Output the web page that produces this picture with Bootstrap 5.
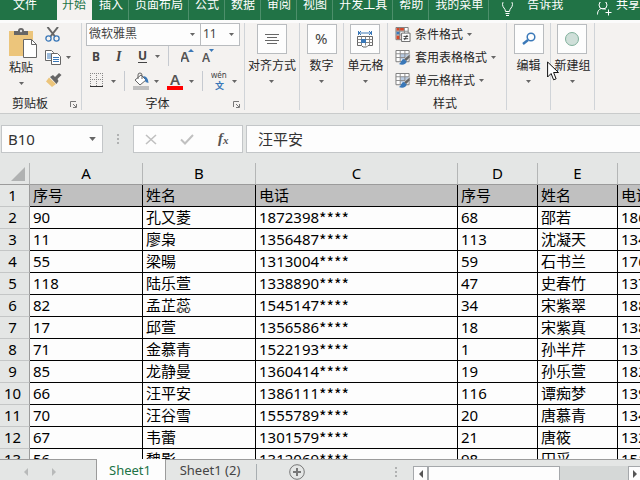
<!DOCTYPE html>
<html lang="zh-CN">
<head>
<meta charset="utf-8">
<meta name="viewport" content="width=device-width, initial-scale=1">
<title>Sheet1</title>
<link href="https://cdn.jsdelivr.net/npm/bootstrap@5.3.0/dist/css/bootstrap.min.css" rel="stylesheet">
<style>
:root { --green:#217346; --ribbon:#f4f2f0; --chrome:#e4e6e5; --line:#c3c6c8; }
body { font-family:"Noto Sans","Noto Sans CJK SC",sans-serif; font-size:12px; line-height:16px; color:#262626; background:var(--chrome); }
button { color:inherit; line-height:16px; }
.tool { border:0; background:none; padding:0; display:flex; align-items:center; }
.tool svg, .tool-stack svg { display:block; flex:none; }
.tabs { background:var(--green); height:20px; }
.tabs .nav-link { color:#fff; height:20px; line-height:12px; padding:0 5px 9px 6px; border-radius:0; display:flex; align-items:flex-end; white-space:nowrap; border-right:1px solid #4d8f6b; }
.tabs .nav-link.file { padding-left:13px; padding-right:20px; border-right:0; }
.tabs .nav-link.current { background:var(--ribbon); color:var(--green); padding-left:5px; padding-right:6px; border-right-color:var(--green); }
.tabs .plain { border-right:0; }
.tabs svg { margin-bottom:-9px; }
.ribbon { background:var(--ribbon); border-top:3px solid #fbfbfb; border-bottom:1px solid #c9cbcb; height:94px; }
.group { height:87px; border-right:1px solid #d0d4d8; display:flex; flex-direction:column; flex:none; }
.g-clip { width:82px; } .g-font { width:163px; } .g-align { width:55px; } .g-one { width:44px; } .g-style { width:119px; }
.foot { height:16px; padding-top:4px; padding-right:4px; }
.combo { appearance:none; height:23px; border:1px solid #b9bcbf; border-radius:0; color:#444; font-size:12px; line-height:16px; padding:0 0 1px 2px; background:#fdfdfd url("data:image/svg+xml,%3Csvg xmlns='http://www.w3.org/2000/svg' width='5' height='3'%3E%3Cpath d='M0 0h5L2.500 3z' fill='%23666'/%3E%3C/svg%3E") no-repeat right 5px center; }
.combo-name { width:115px; } .combo-size { width:40px; margin-left:-1px; }
.tool-stack { border:0; background:none; padding:0; display:flex; flex-direction:column; align-items:center; white-space:nowrap; }
.paste { padding:5px 0 0 9px; }
.clip-tools { padding:4px 0 0 8px; }
.tile { width:30px; height:30px; margin:1px 0 4px; border:1px solid #b9bcbf; background:#fdfdfd; display:flex; align-items:center; justify-content:center; }
.drop { margin-top:6px; }
.style-tools { padding:4px 0 0 7px; gap:8px; }
.style-tools .tool { gap:4px; }
.vsep { width:1px; height:20px; background:#c6cad0; flex:none; }
.fx-bar { padding:11px 0 10px 1px; }
.box { height:28px; border:1px solid var(--line); background:#fdfdfd; }
.box input { border:0; background:none; outline:0; font-size:15px; line-height:20px; color:#333; padding:0; min-width:0; }
.name-box { width:102px; padding-right:6px; } .name-box input { width:80px; padding-left:6px; flex-grow:1; }
.fx-keys { width:110px; }
.formula { border-right:0; margin-left:3px; padding-left:11px; }
.sheet { table-layout:fixed; width:820px; border-collapse:separate; border-spacing:0; color:#000; font-size:15px; line-height:21px; background:#fdfdfd; }
.sheet td, .sheet th { padding:0 0 0 3px; height:22px; font-weight:400; white-space:nowrap; overflow:hidden; border-right:1px solid #000; border-bottom:1px solid #000; }
.sheet tbody th { background:var(--chrome); text-align:center; padding:0 4px 0 0; border-right-color:#9b9b9b; border-bottom-color:#c4c6c6; }
.sheet thead th { background:var(--chrome); text-align:center; padding:0; border-right-color:#b4b6b6; border-bottom-color:#9b9b9b; }
.sheet .labels td { background:#c0c0c0; }
.hid { font-family:"Noto Sans CJK SC",sans-serif; font-size:16px; line-height:1; vertical-align:-2px; }
.w-head { width:30px; } .w-a { width:113px; } .w-c { width:202px; } .w-d { width:80px; }
.sheetbar { height:21px; border-top:1px solid #9b9b9b; font-size:13px; line-height:20px; }
.sheetbar .stab { border:0; background:none; padding:0; color:#444; white-space:nowrap; line-height:20px; }
.sheetbar .stab.current { background:#fdfdfd; color:var(--green); width:70px; border:solid #9b9b9b; border-width:0 1px; margin-top:-1px; height:21px; padding:1px 2px 0 0; }
.sheetbar .stab.second { width:90px; padding:0 2px 0 0; }
.sheet-nav { width:96px; }
.hscroll { width:227px; padding-top:6px; }
.sb { border:1px solid #a5a8ab; background:#fdfdfd; height:15px; padding:0; display:flex; align-items:center; justify-content:center; flex:none; }
.sb-left { width:15px; } .sb-right { width:12px; } .thumb { width:66%; }
.track { background:#d5d8d7; }
.pointer { position:absolute; left:547px; top:61px; z-index:5; }
</style>
<script src="https://cdn.jsdelivr.net/npm/bootstrap@5.3.0/dist/js/bootstrap.bundle.min.js"></script>
</head>
<body>
<svg class="d-none" aria-hidden="true">
  <symbol id="caret" viewBox="0 0 5 3"><path d="M0 0h5L2.500 3z" fill="#666"/></symbol>
  <symbol id="launch" viewBox="0 0 7 7"><path d="M.5 6V.5H6M3 3l3 3M6.500 3v3.500H3" fill="none" stroke="#777"/></symbol>
  <symbol id="brushgrid" viewBox="0 0 16 16"><path d="M.5.5h14v12H.5z" fill="#fff" stroke="#777"/><path d="M5 4h9v6H5z" fill="#b9cbe2"/><path d="M.5 4h14M.5 8h14M5 .5v12M10 .5v12" fill="none" stroke="#8a8a8a"/><path d="M15.500 4v4l-4 4-3-2z" fill="#666" stroke="#f4f2f0" stroke-width=".6"/><path d="M9 9.500c-3 0-2.500 4-5.500 5.500 4 1.500 8 .5 8.500-3z" fill="#3a78b8"/></symbol>
</svg>
<div class="vh-100 d-flex flex-column overflow-hidden position-relative">
  <nav class="tabs nav flex-nowrap overflow-hidden flex-shrink-0" aria-label="功能区">
    <a class="nav-link file" href="#">文件</a>
    <a class="nav-link current" href="#">开始</a>
    <a class="nav-link" href="#">插入</a>
    <a class="nav-link" href="#">页面布局</a>
    <a class="nav-link" href="#">公式</a>
    <a class="nav-link" href="#">数据</a>
    <a class="nav-link" href="#">审阅</a>
    <a class="nav-link" href="#">视图</a>
    <a class="nav-link" href="#">开发工具</a>
    <a class="nav-link" href="#">帮助</a>
    <a class="nav-link" href="#">我的菜单</a>
    <a class="nav-link plain ps-2" href="#"><svg class="me-2" width="22" height="18" viewBox="0 0 22 18" fill="none" stroke="#fff"><path d="M8.500 9.500c0-3-3-4-3-7a5 5 0 0 1 10 0c0 3-3 4-3 7zM8.500 11.500h4M9 13.500h3"/></svg>告诉我</a>
    <a class="nav-link plain ms-auto pe-0" href="#"><svg class="me-1" width="15" height="18" viewBox="0 0 15 18" fill="none" stroke="#fff"><path d="M.5 12.500c0-4 2-6 5-6 1 0 2 .3 3 1M8.500 10.500h6M11.500 7.500v6"/><circle cx="6" cy="3" r="4"/></svg>共享</a>
  </nav>

  <div class="ribbon d-flex flex-shrink-0 overflow-hidden">
    <section class="group g-clip" aria-label="剪贴板">
      <div class="d-flex flex-grow-1">
        <button class="tool-stack paste">
          <svg width="28" height="30" viewBox="0 0 28 30"><path d="M0 3h24v25H0z" fill="#ecc57b"/><path d="M5 7V3h4a3 3 0 0 1 6 0h4v4z" fill="#666"/><circle cx="12" cy="3" r="1.200" fill="#ddd"/><path d="M14.500 11.500h8l5 5v13h-13z" fill="#fff" stroke="#666"/><path d="M22.500 11.500v5h5" fill="none" stroke="#666"/></svg>
          <span class="lh-1 pt-1 pe-1">粘贴</span>
          <svg class="mt-2 me-1" width="5" height="3"><use href="#caret"/></svg>
        </button>
        <div class="d-flex flex-column gap-2 clip-tools">
          <button class="tool" aria-label="剪切"><svg width="16" height="15" viewBox="0 0 16 15"><path d="M2.500 0l7.500 9.500M13 0L5.500 9.500" stroke="#666" stroke-width="2"/><circle cx="3.500" cy="11.500" r="2.600" fill="none" stroke="#3a78b8" stroke-width="1.300"/><circle cx="11.500" cy="11.500" r="2.600" fill="none" stroke="#3a78b8" stroke-width="1.300"/></svg></button>
          <button class="tool" aria-label="复制"><svg width="17" height="15" viewBox="0 0 17 15"><path d="M.5.500h6l2 2v8h-8z" fill="#fff" stroke="#666"/><path d="M2 4h4M2 6h4M2 8h4" stroke="#3a78b8"/><path d="M6.500 3.500h6l3 3v8h-9z" fill="#fff" stroke="#666"/><path d="M8 7.500h6M8 9.500h6M8 11.500h6" stroke="#3a78b8"/></svg><svg class="ms-1" width="5" height="3"><use href="#caret"/></svg></button>
          <button class="tool" aria-label="格式刷"><svg width="17" height="15" viewBox="0 0 17 15"><path d="M4 4.500L1 8.500 7 14l4-3z" fill="#ecc57b"/><path d="M5 4l3-2 2 2 4-4 2.500 2-4 4 1 2-2 3z" fill="#666"/></svg></button>
        </div>
      </div>
      <div class="foot d-flex align-items-center justify-content-between ps-2"><span class="ms-1">剪贴板</span><button class="tool" aria-label="剪贴板设置"><svg width="7" height="7"><use href="#launch"/></svg></button></div>
    </section>

    <section class="group g-font" aria-label="字体">
      <div class="flex-grow-1 ps-1">
        <div class="d-flex">
          <select class="combo combo-name" aria-label="字体名称"><option>微软雅黑</option></select>
          <select class="combo combo-size" aria-label="字号"><option>11</option></select>
        </div>
        <div class="d-flex align-items-center ps-1">
          <button class="tool fw-bold" aria-label="加粗"><svg width="24" height="16" viewBox="0 0 24 16"><text x="2" y="13" font-size="12" fill="#444">B</text></svg></button>
          <button class="tool fw-bold" aria-label="倾斜"><svg width="24" height="16" viewBox="0 0 24 16"><text x="2" y="13" font-size="14" font-style="italic" font-family="Liberation Serif" fill="#444">I</text></svg></button>
          <button class="tool fw-bold" aria-label="下划线"><svg width="17" height="16" viewBox="0 0 17 16"><text x="0" y="12" font-size="12" fill="#444">U</text><path d="M0 14.500h9" stroke="#444"/></svg><svg width="5" height="3"><use href="#caret"/></svg></button>
          <span class="vsep ms-2"></span>
          <button class="tool ms-2 ps-1" aria-label="增大字号"><svg width="21" height="16" viewBox="0 0 21 16"><text x="-1" y="14" font-size="14" font-weight="600" fill="#555">A</text><path d="M7 4l3-3 3 3z" fill="#3a78b8"/></svg></button>
          <button class="tool" aria-label="减小字号"><svg width="16" height="16" viewBox="0 0 16 16"><text x="0" y="14" font-size="12" font-weight="600" fill="#555">A</text><path d="M7 1h5L9.500 4z" fill="#3a78b8"/></svg></button>
        </div>
        <div class="d-flex align-items-center ps-1 mt-1">
          <button class="tool" aria-label="边框"><svg width="21" height="16" viewBox="0 0 21 16"><path d="M.5 0v13M12.500 0v13M6.500 0v13M0 .5h13M0 6.500h13" stroke="#888" stroke-dasharray="1 1"/><path d="M0 13.500h13" stroke="#333"/></svg><svg width="5" height="3"><use href="#caret"/></svg></button>
          <span class="vsep ms-2"></span>
          <button class="tool ms-2" aria-label="填充颜色"><svg width="21" height="18" viewBox="0 0 21 18"><path d="M2 8l6-5 5 5-6 5z" fill="#fff" stroke="#666"/><path d="M5 7V3q0-2 2-2t2 2v4" fill="none" stroke="#666"/><path d="M10 4q5 0 5.500 7l-3-1q0-3-2.500-6" fill="#3a78b8"/><path d="M0 14h16v4H0z" fill="#bfbfbf"/></svg><svg width="5" height="3"><use href="#caret"/></svg></button>
          <button class="tool ms-2" aria-label="字体颜色"><svg width="22" height="18" viewBox="0 0 22 18"><text x="3" y="13" font-size="15" font-weight="600" fill="#555">A</text><path d="M0 14h16v4H0z" fill="#f00"/></svg><svg width="5" height="3"><use href="#caret"/></svg></button>
          <span class="vsep ms-2"></span>
          <button class="tool ms-2" aria-label="拼音指南"><svg width="21" height="22" viewBox="0 0 21 22"><text x="0" y="8" font-size="8" fill="#444">wén</text><text x="4" y="19" font-size="9" font-weight="700" fill="#3a78b8">文</text></svg><svg width="5" height="3"><use href="#caret"/></svg></button>
        </div>
      </div>
      <div class="foot d-flex align-items-center"><span class="flex-grow-1 text-center">字体</span><button class="tool" aria-label="字体设置"><svg width="7" height="7"><use href="#launch"/></svg></button></div>
    </section>

    <section class="group g-align"><button class="tool-stack mx-auto"><span class="tile"><svg width="14" height="12" viewBox="0 0 14 12"><path d="M0 1.500h14M2 4.500h10M0 7.500h14M2 10.500h10" stroke="#666"/></svg></span><span>对齐方式</span><svg class="drop" width="5" height="3"><use href="#caret"/></svg></button></section>
    <section class="group g-one"><button class="tool-stack mx-auto"><span class="tile"><svg width="16" height="16" viewBox="0 0 16 16"><text x="1" y="13" font-size="15" fill="#444">%</text></svg></span><span>数字</span><svg class="drop" width="5" height="3"><use href="#caret"/></svg></button></section>
    <section class="group g-one"><button class="tool-stack mx-auto"><span class="tile"><svg width="16" height="17" viewBox="0 0 16 17"><path d="M1 2h14M1.500 0v4M14.500 0v4M4 0L2 2l2 2M12 0l2 2-2 2" fill="none" stroke="#3a78b8"/><path d="M.5 5.500h15v9H11l-1.500 1.500H6L4.500 14.500h-4z" fill="#fff" stroke="#666"/><path d="M.5 8.500h15M.5 11.500h15M4.500 5.500v9M8.500 5.500v9M12.500 5.500v9" stroke="#888"/><path d="M4 8h5v4H4z" fill="#3a78b8"/></svg></span><span>单元格</span><svg class="drop" width="5" height="3"><use href="#caret"/></svg></button></section>

    <section class="group g-style" aria-label="样式">
      <div class="flex-grow-1 d-flex flex-column style-tools text-nowrap">
        <button class="tool lh-1"><svg width="16" height="15" viewBox="0 0 16 16"><path d="M.5.500h13v13H.5z" fill="#fff" stroke="#777"/><path d="M1 1h8v3H1zM1 9h4v4H1z" fill="#d6492a"/><path d="M1 5h4v3H1z" fill="#3a78b8"/><path d="M.5 4.500h13M.5 8.500h13M4.500.5v13M9.500.5v13" stroke="#888"/><path d="M6.500 6.500h9v9h-9z" fill="#fff" stroke="#666"/><path d="M8.500 10h5M8.500 12.500h5M12.500 8.500l-3 5.500" stroke="#333"/></svg>条件格式<svg width="5" height="3"><use href="#caret"/></svg></button>
        <button class="tool lh-1"><svg width="16" height="15"><use href="#brushgrid"/></svg>套用表格格式<svg width="5" height="3"><use href="#caret"/></svg></button>
        <button class="tool lh-1"><svg width="16" height="15"><use href="#brushgrid"/></svg>单元格样式<svg width="5" height="3"><use href="#caret"/></svg></button>
      </div>
      <div class="foot d-flex align-items-center justify-content-center">样式</div>
    </section>

    <section class="group g-one"><button class="tool-stack mx-auto"><span class="tile"><svg width="14" height="14" viewBox="0 0 14 14"><circle cx="9" cy="5" r="3.800" fill="#fff" stroke="#3a78b8" stroke-width="1.500"/><path d="M6 8l-5 4" stroke="#3a78b8" stroke-width="2.500"/></svg></span><span>编辑</span><svg class="drop" width="5" height="3"><use href="#caret"/></svg></button></section>
    <section class="group g-one"><button class="tool-stack mx-auto"><span class="tile"><svg width="16" height="16" viewBox="0 0 16 16"><circle cx="8" cy="8" r="6.500" fill="#cfdfd9" stroke="#7fb09b"/></svg></span><span>新建组</span><svg class="drop" width="5" height="3"><use href="#caret"/></svg></button></section>
  </div>

  <div class="fx-bar d-flex align-items-center flex-shrink-0">
    <div class="box name-box d-flex align-items-center"><input aria-label="名称框" value="B10"><svg width="7" height="4"><use href="#caret"/></svg></div>
    <svg class="mx-2" width="14" height="12" viewBox="0 0 14 12"><path d="M6 1h2v2H6zM6 5h2v2H6zM6 9h2v2H6z" fill="#b0b2b2"/></svg>
    <div class="box fx-keys d-flex align-items-center justify-content-around">
      <button class="tool" aria-label="取消"><svg width="12" height="11" viewBox="0 0 12 11"><path d="M1 1l10 9M11 1L1 10" stroke="#c0c0c0" stroke-width="1.600"/></svg></button>
      <button class="tool" aria-label="输入"><svg width="14" height="11" viewBox="0 0 14 11"><path d="M1 5.500L5 9.500 13 1" fill="none" stroke="#c0c0c0" stroke-width="2"/></svg></button>
      <button class="tool" aria-label="插入函数"><svg width="14" height="16" viewBox="0 0 14 16"><text x="1" y="12" font-family="Liberation Serif" font-style="italic" font-weight="700" font-size="15" fill="#555">f</text><text x="6" y="13" font-family="Liberation Serif" font-style="italic" font-weight="700" font-size="11" fill="#555">x</text></svg></button>
    </div>
    <div class="box formula flex-grow-1 d-flex align-items-center"><input class="w-100" aria-label="编辑栏" value="汪平安"></div>
  </div>

  <main class="flex-grow-1 overflow-hidden bg-white">
    <table class="sheet">
      <colgroup><col class="w-head"><col class="w-a"><col class="w-a"><col class="w-c"><col class="w-d"><col class="w-d"><col class="w-c"></colgroup>
      <thead><tr><th aria-label="全选"><svg class="d-block ms-auto me-1" width="14" height="14" viewBox="0 0 14 14"><path d="M14 0v14H0z" fill="#b0b2b2"/></svg></th><th>A</th><th>B</th><th>C</th><th>D</th><th>E</th><th>F</th></tr></thead>
      <tbody>
        <tr class="labels"><th>1</th><td>序号</td><td>姓名</td><td>电话</td><td>序号</td><td>姓名</td><td>电话</td></tr>
        <tr><th>2</th><td>90</td><td>孔又菱</td><td>1872398<span class="hid">****</span></td><td>68</td><td>邵若</td><td>186</td></tr>
        <tr><th>3</th><td>11</td><td>廖枭</td><td>1356487<span class="hid">****</span></td><td>113</td><td>沈凝天</td><td>134</td></tr>
        <tr><th>4</th><td>55</td><td>梁暘</td><td>1313004<span class="hid">****</span></td><td>59</td><td>石书兰</td><td>176</td></tr>
        <tr><th>5</th><td>118</td><td>陆乐萱</td><td>1338890<span class="hid">****</span></td><td>47</td><td>史春竹</td><td>137</td></tr>
        <tr><th>6</th><td>82</td><td>孟芷蕊</td><td>1545147<span class="hid">****</span></td><td>34</td><td>宋紫翠</td><td>188</td></tr>
        <tr><th>7</th><td>17</td><td>邱萱</td><td>1356586<span class="hid">****</span></td><td>18</td><td>宋紫真</td><td>138</td></tr>
        <tr><th>8</th><td>71</td><td>金慕青</td><td>1522193<span class="hid">****</span></td><td>1</td><td>孙半芹</td><td>131</td></tr>
        <tr><th>9</th><td>85</td><td>龙静曼</td><td>1360414<span class="hid">****</span></td><td>19</td><td>孙乐萱</td><td>182</td></tr>
        <tr><th>10</th><td>66</td><td>汪平安</td><td>1386111<span class="hid">****</span></td><td>116</td><td>谭痴梦</td><td>139</td></tr>
        <tr><th>11</th><td>70</td><td>汪谷雪</td><td>1555789<span class="hid">****</span></td><td>20</td><td>唐慕青</td><td>134</td></tr>
        <tr><th>12</th><td>67</td><td>韦蕾</td><td>1301579<span class="hid">****</span></td><td>21</td><td>唐筱</td><td>132</td></tr>
        <tr><th>13</th><td>56</td><td>魏影</td><td>1312069<span class="hid">****</span></td><td>98</td><td>田采</td><td>151</td></tr>
      </tbody>
    </table>
  </main>

  <footer class="sheetbar d-flex flex-shrink-0">
    <div class="sheet-nav d-flex align-items-center gap-4 ps-4 pt-1">
      <button class="tool" aria-label="上一个"><svg width="4" height="8" viewBox="0 0 4 8"><path d="M4 0v8L0 4z" fill="#b8baba"/></svg></button>
      <button class="tool" aria-label="下一个"><svg width="4" height="8" viewBox="0 0 4 8"><path d="M0 0v8l4-4z" fill="#b8baba"/></svg></button>
    </div>
    <button class="stab current">Sheet1</button>
    <button class="stab second">Sheet1 (2)</button>
    <div class="vsep mt-1 bg-secondary opacity-50"></div>
    <button class="tool ms-4 ps-2 pt-1" aria-label="新工作表"><svg width="16" height="16" viewBox="0 0 16 16" fill="none" stroke="#777"><circle cx="8" cy="8" r="7.300"/><path d="M8 4v8M4 8h8" stroke-width="2"/></svg></button>
    <div class="flex-grow-1 d-flex justify-content-end align-items-center pe-3 pt-1"><svg width="2" height="11" viewBox="0 0 2 11"><path d="M0 0h2v2H0zM0 4h2v2H0zM0 8h2v2H0z" fill="#b0b2b2"/></svg></div>
    <div class="hscroll d-flex">
      <button class="sb sb-left" aria-label="向左滚动"><svg width="4" height="8" viewBox="0 0 4 8"><path d="M4 0v8L0 4z" fill="#555"/></svg></button>
      <div class="track flex-grow-1"><div class="sb thumb"></div></div>
      <button class="sb sb-right border-end-0" aria-label="向右滚动"><svg width="4" height="8" viewBox="0 0 4 8"><path d="M0 0v8l4-4z" fill="#555"/></svg></button>
    </div>
  </footer>
  <svg class="pointer" width="13" height="20" viewBox="0 0 13 20"><path d="M.6 1v15l3.500-3.500 2.500 6.300 2.500-1L6.600 11.500H11.500z" fill="#fff" stroke="#111"/></svg>
</div>
</body>
</html>
